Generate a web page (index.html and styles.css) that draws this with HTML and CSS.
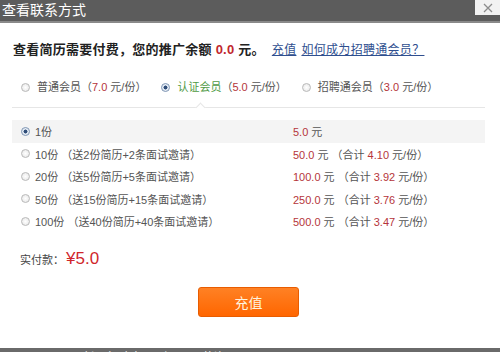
FILE: index.html
```html
<!DOCTYPE html>
<html>
<head>
    <title>查看联系方式</title>
    <meta charset="utf-8">
    <link rel="stylesheet" href="styles.css">
</head>
<body>
    <div class="dialog">
        <div class="titlebar">
            <span class="title">查看联系方式</span>
            <span class="close">
                <svg width="10" height="10" viewBox="0 0 10 10">
                    <path d="M1 1 L9 9 M9 1 L1 9" stroke="#8c8c8c" stroke-width="1.3" fill="none"/>
                </svg>
            </span>
        </div>

        <div class="content">
            <p class="notice">
                查看简历需要付费，您的推广余额 <em>0.0</em> 元。<a href="javascript:void(0)" class="link">充值</a><a href="javascript:void(0)" class="link">如何成为招聘通会员？</a>
            </p>

            <div class="levels">
                <label class="level">
                    <span class="radio"></span>普通会员（<em>7.0</em>&nbsp;元/份）
                </label>
                <label class="level active">
                    <span class="radio checked"></span>认证会员<span class="plain">（<em>5.0</em>&nbsp;元/份）</span>
                </label>
                <label class="level">
                    <span class="radio"></span>招聘通会员（<em>3.0</em>&nbsp;元/份）
                </label>
            </div>

            <ul class="packs">
                <li class="pack selected">
                    <span class="pack-name"><span class="radio checked"></span>1份</span>
                    <span class="pack-price"><em>5.0</em> 元</span>
                </li>
                <li class="pack">
                    <span class="pack-name"><span class="radio"></span>10份&nbsp;（送2份简历+2条面试邀请）</span>
                    <span class="pack-price"><em>50.0</em> 元&nbsp;（合计 <em>4.10</em> 元/份）</span>
                </li>
                <li class="pack">
                    <span class="pack-name"><span class="radio"></span>20份&nbsp;（送5份简历+5条面试邀请）</span>
                    <span class="pack-price"><em>100.0</em> 元&nbsp;（合计 <em>3.92</em> 元/份）</span>
                </li>
                <li class="pack">
                    <span class="pack-name"><span class="radio"></span>50份&nbsp;（送15份简历+15条面试邀请）</span>
                    <span class="pack-price"><em>250.0</em> 元&nbsp;（合计 <em>3.76</em> 元/份）</span>
                </li>
                <li class="pack">
                    <span class="pack-name"><span class="radio"></span>100份&nbsp;（送40份简历+40条面试邀请）</span>
                    <span class="pack-price"><em>500.0</em> 元&nbsp;（合计 <em>3.47</em> 元/份）</span>
                </li>
            </ul>

            <div class="total">实付款：<em>¥5.0</em></div>

            <div class="actions">
                <button class="pay-btn">充值</button>
            </div>
        </div>

        <!-- page behind the dialog, mostly covered -->
        <div class="behind">
            <span>至 2010-11</span>
            <span>任职行政专员/助理</span>
            <span>薪资2000-3000元/月</span>
        </div>
    </div>
</body>
</html>
```

FILE: styles.css
```css
body {
    margin: 0;
    background-color: #fff;
    font-family: "Liberation Sans", "Noto Sans CJK SC", sans-serif;
    font-size: 11px;
    color: #444;
}

em {
    font-style: normal;
    color: #b5353a;
}

.dialog {
    width: 500px;
    height: 352px;
    display: flex;
    flex-direction: column;
    overflow: hidden;
}

/* title bar */
.titlebar {
    height: 21px;
    background-color: #5c5c5c;
    border-bottom: 2px solid #8a8a8a;
    display: flex;
    justify-content: space-between;
    align-items: flex-start;
}

.title {
    color: #fff;
    font-size: 14px;
    line-height: 21px;
    padding-left: 2px;
}

.close {
    width: 25px;
    height: 15px;
    background-color: #f2f2f2;
    display: flex;
    align-items: center;
    justify-content: center;
}

.content {
    flex: 1;
    padding: 0 15px 0 12px;
}

.notice {
    margin: 17px 0 0 1px;
    font-size: 13px;
    font-weight: bold;
    line-height: 20px;
    color: #222;
    letter-spacing: 0.25px;
}

.notice em {
    color: #c1272d;
}

.link {
    color: #2f4f8f;
    font-size: 12px;
    font-weight: normal;
    letter-spacing: 0.3px;
    margin-left: 7px;
}

.link + .link {
    margin-left: 5px;
}

/* member levels */
.levels {
    position: relative;
    margin-top: 17px;
    padding: 0 0 10px 9px;
    border-bottom: 1px solid #e6e6e6;
    display: flex;
    line-height: 20px;
    color: #555;
}

.levels::after {
    content: "";
    position: absolute;
    left: 185px;
    bottom: -4px;
    width: 6px;
    height: 6px;
    background-color: #fff;
    border-top: 1px solid #e6e6e6;
    border-left: 1px solid #e6e6e6;
    transform: rotate(45deg);
}

.level {
    display: flex;
    align-items: center;
    margin-right: 15px;
}

.level .radio {
    margin-right: 7px;
}

.level.active {
    color: #4f9a45;
}

.level .plain {
    color: #555;
}

.radio {
    display: inline-block;
    box-sizing: border-box;
    width: 9px;
    height: 9px;
    border-radius: 50%;
    border: 1px solid #b9b9b9;
    background: radial-gradient(circle, #fff 0%, #e4e4e4 100%);
    flex-shrink: 0;
}

.radio.checked {
    border-color: #7d94b3;
    background: radial-gradient(circle, #2f4d78 0%, #2f4d78 35%, #dbe4ef 45%, #fff 100%);
}

/* packages */
.packs {
    list-style: none;
    margin: 12px 0 0 0;
    padding: 0;
}

.pack {
    height: 22.5px;
    display: flex;
    align-items: center;
    color: #555;
}

.pack.selected {
    background-color: #f4f4f4;
}

.pack-name {
    width: 272px;
    padding-left: 9px;
    display: flex;
    align-items: center;
}

.pack-name .radio {
    margin-right: 5px;
}

.total {
    margin-top: 16px;
    padding-left: 8px;
    line-height: 20px;
    color: #444;
}

.total em {
    font-size: 17px;
    margin-left: 2px;
    color: #d0262b;
}

.actions {
    margin-top: 17px;
    text-align: center;
}

.pay-btn {
    width: 101px;
    height: 30px;
    border: 1px solid #e85c00;
    border-radius: 3px;
    background: linear-gradient(#ff8124, #ff6600);
    color: #fff3df;
    font-family: "Noto Sans CJK SC", sans-serif;
    font-size: 14px;
    cursor: pointer;
}

/* strip of the underlying page */
.behind {
    height: 4px;
    background-color: #6a6a6a;
    color: #eee;
    font-size: 12px;
    line-height: 20px;
    overflow: hidden;
    display: flex;
    gap: 20px;
    padding-left: 4px;
}
```
